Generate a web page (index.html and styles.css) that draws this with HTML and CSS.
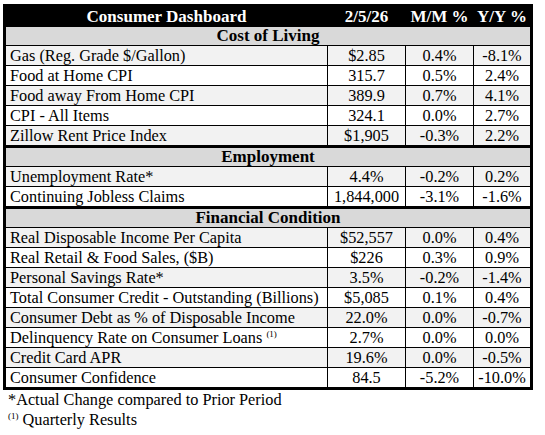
FILE: index.html
```html
<!DOCTYPE html>
<html>

<head>
  <title>Consumer Dashboard</title>
  <link rel="stylesheet" href="styles.css">
</head>

<body>

  <table class="dash">
    <colgroup>
      <col class="col_label">
      <col class="col_value">
      <col class="col_mm">
      <col class="col_yy">
    </colgroup>
    <tr class="title_row">
      <th>Consumer Dashboard</th>
      <th>2/5/26</th>
      <th>M/M %</th>
      <th>Y/Y %</th>
    </tr>

    <tr class="section first_section"><td colspan="4">Cost of Living</td></tr>
    <tr class="shade"><td class="label">Gas (Reg. Grade $/Gallon)</td><td>$2.85</td><td>0.4%</td><td>-8.1%</td></tr>
    <tr><td class="label">Food at Home CPI</td><td>315.7</td><td>0.5%</td><td>2.4%</td></tr>
    <tr class="shade"><td class="label">Food away From Home CPI</td><td>389.9</td><td>0.7%</td><td>4.1%</td></tr>
    <tr><td class="label">CPI - All Items</td><td>324.1</td><td>0.0%</td><td>2.7%</td></tr>
    <tr class="shade"><td class="label">Zillow Rent Price Index</td><td>$1,905</td><td>-0.3%</td><td>2.2%</td></tr>

    <tr class="section"><td colspan="4">Employment</td></tr>
    <tr class="shade"><td class="label">Unemployment Rate*</td><td>4.4%</td><td>-0.2%</td><td>0.2%</td></tr>
    <tr><td class="label">Continuing Jobless Claims</td><td>1,844,000</td><td>-3.1%</td><td>-1.6%</td></tr>

    <tr class="section"><td colspan="4">Financial Condition</td></tr>
    <tr class="shade"><td class="label">Real Disposable Income Per Capita</td><td>$52,557</td><td>0.0%</td><td>0.4%</td></tr>
    <tr><td class="label">Real Retail &amp; Food Sales, ($B)</td><td>$226</td><td>0.3%</td><td>0.9%</td></tr>
    <tr class="shade"><td class="label">Personal Savings Rate*</td><td>3.5%</td><td>-0.2%</td><td>-1.4%</td></tr>
    <tr><td class="label">Total Consumer Credit - Outstanding (Billions)</td><td>$5,085</td><td>0.1%</td><td>0.4%</td></tr>
    <tr class="shade"><td class="label">Consumer Debt as % of Disposable Income</td><td>22.0%</td><td>0.0%</td><td>-0.7%</td></tr>
    <tr><td class="label">Delinquency Rate on Consumer Loans <sup class="note">(1)</sup></td><td>2.7%</td><td>0.0%</td><td>0.0%</td></tr>
    <tr class="shade"><td class="label">Credit Card APR</td><td>19.6%</td><td>0.0%</td><td>-0.5%</td></tr>
    <tr><td class="label">Consumer Confidence</td><td>84.5</td><td>-5.2%</td><td>-10.0%</td></tr>
  </table>

  <div class="footnotes">
    <div>*Actual Change compared to Prior Period</div>
    <div><sup class="note">(1)</sup> Quarterly Results</div>
  </div>

</body>

</html>
```

FILE: styles.css
```css
body {
  margin: 4px 3px;
  font-family: "Liberation Serif", "Times New Roman", serif;
  font-size: 16.3px;
  color: #000;
  background: #fff;
}

.dash {
  width: 527px;
  table-layout: fixed;
  border-collapse: collapse;
  border: 3px solid #000;
}

.col_label { width: 323px; }
.col_value { width: 78px; }
.col_mm { width: 68px; }
.col_yy { width: 58px; }

.dash td,
.dash th {
  height: 19px;
  padding: 0 3px;
  border: 1px solid #000;
  text-align: center;
  white-space: nowrap;
  line-height: 19px;
}

.dash .label {
  text-align: left;
  padding-left: 4px;
}

.title_row th {
  height: 19px;
  line-height: 19px;
  background: #000;
  color: #fff;
  font-weight: bold;
  font-size: 17px;
  border-color: #000;
}

.section td {
  height: 18px;
  line-height: 18px;
  background: #d9d9d9;
  font-weight: bold;
  font-size: 17px;
  border-top: 3px solid #000;
}

.first_section td {
  border-top: 1px solid #000;
}

.shade td {
  background: #f2f2f2;
}

.note {
  font-size: 9px;
  line-height: 0;
  vertical-align: 6px;
}

.footnotes {
  padding: 0 5px;
  line-height: 20px;
}
```
